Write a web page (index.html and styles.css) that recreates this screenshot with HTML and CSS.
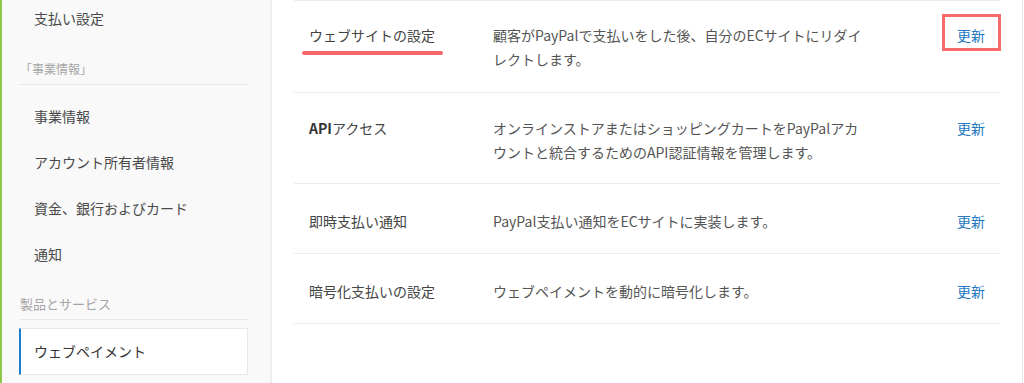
FILE: index.html
```html
<!DOCTYPE html>
<html lang="ja">
<head>
    <meta charset="UTF-8">
    <meta name="viewport" content="width=device-width, initial-scale=1.0">
    <title>ウェブペイメント</title>
    <link rel="stylesheet" href="styles.css">
</head>
<body>
    <div class="page">
        <aside class="sidebar">
            <ul class="nav">
                <li class="nav-item">支払い設定</li>
                <li class="nav-label">「事業情報」</li>
                <li class="nav-item">事業情報</li>
                <li class="nav-item">アカウント所有者情報</li>
                <li class="nav-item">資金、銀行およびカード</li>
                <li class="nav-item">通知</li>
                <li class="nav-label">製品とサービス</li>
                <li class="nav-item active">ウェブペイメント</li>
            </ul>
        </aside>

        <main class="content">
            <div class="setting-row">
                <div class="setting-title"><span class="marked">ウェブサイトの設定</span></div>
                <div class="setting-desc">顧客がPayPalで支払いをした後、自分のECサイトにリダイレクトします。</div>
                <div class="setting-action"><a class="update boxed" href="#">更新</a></div>
            </div>
            <div class="setting-row">
                <div class="setting-title"><b>API</b>アクセス</div>
                <div class="setting-desc">オンラインストアまたはショッピングカートをPayPalアカウントと統合するためのAPI認証情報を管理します。</div>
                <div class="setting-action"><a class="update" href="#">更新</a></div>
            </div>
            <div class="setting-row">
                <div class="setting-title">即時支払い通知</div>
                <div class="setting-desc">PayPal支払い通知をECサイトに実装します。</div>
                <div class="setting-action"><a class="update" href="#">更新</a></div>
            </div>
            <div class="setting-row">
                <div class="setting-title">暗号化支払いの設定</div>
                <div class="setting-desc">ウェブペイメントを動的に暗号化します。</div>
                <div class="setting-action"><a class="update" href="#">更新</a></div>
            </div>
        </main>
    </div>
</body>
</html>
```

FILE: styles.css
```css
* {
    margin: 0;
    padding: 0;
    box-sizing: border-box;
}

body {
    font-family: "Noto Sans CJK JP", "Noto Sans", sans-serif;
    font-size: 14px;
    color: #444;
    background: #fff;
    height: 383px;
    overflow: hidden;
}

.page {
    display: flex;
    height: 383px;
    border-left: 2px solid #8cc94a;
}

/* left menu */
.sidebar {
    width: 270px;
    flex-shrink: 0;
    background: #f9f9f9;
    border-right: 2px solid #efefef;
    padding: 0 22px 0 17px;
}

.nav {
    list-style: none;
    margin-top: -5px;
}

.nav-item {
    height: 46px;
    line-height: 46px;
    padding-left: 15px;
    color: #4a4a4a;
}

.nav-label {
    font-size: 12px;
    line-height: 16px;
    color: #a5a5a5;
    padding: 20px 0 7px 1px;
    border-bottom: 1px solid #e9e9e9;
    margin-bottom: 8px;
}

.nav-label:nth-child(7) {
    font-size: 13px;
    padding-top: 19px;
}

.nav-item.active {
    height: 47px;
    line-height: 45px;
    margin-top: 2px;
    background: #fff;
    border: 1px solid #e8e8e8;
    border-left: 2px solid #1a7ccf;
    padding-left: 13px;
    color: #333;
}

/* settings list */
.content {
    flex: 1;
    padding: 0 21px 0 22px;
    border-right: 1px solid #e6e6e6;
    margin-right: 1px;
}

.setting-row {
    display: flex;
    align-items: flex-start;
    padding: 25px 16px 20px 15px;
    line-height: 24px;
    border-bottom: 1px solid #ececec;
}

.setting-row:first-child {
    border-top: 1px solid #ececec;
    padding-top: 22px;
    padding-bottom: 21px;
}

.setting-row:nth-child(2) {
    padding-top: 23px;
    padding-bottom: 19px;
}

.setting-title {
    width: 184px;
    flex-shrink: 0;
    color: #444;
}

.setting-title b {
    font-weight: 700;
    color: #333;
}

.setting-desc {
    width: 372px;
    color: #555;
}

.setting-action {
    flex: 1;
    text-align: right;
}

.update {
    color: #2378c0;
    text-decoration: none;
}

/* annotations */
.marked,
.boxed {
    position: relative;
}

.marked::after {
    content: "";
    position: absolute;
    left: -7px;
    right: -8px;
    bottom: -10px;
    height: 4px;
    border-radius: 2px;
    background: #f4676b;
}

.boxed::after {
    content: "";
    position: absolute;
    top: -11px;
    bottom: -6px;
    left: -15px;
    right: -16px;
    border: 3px solid #f66a6c;
}
```
